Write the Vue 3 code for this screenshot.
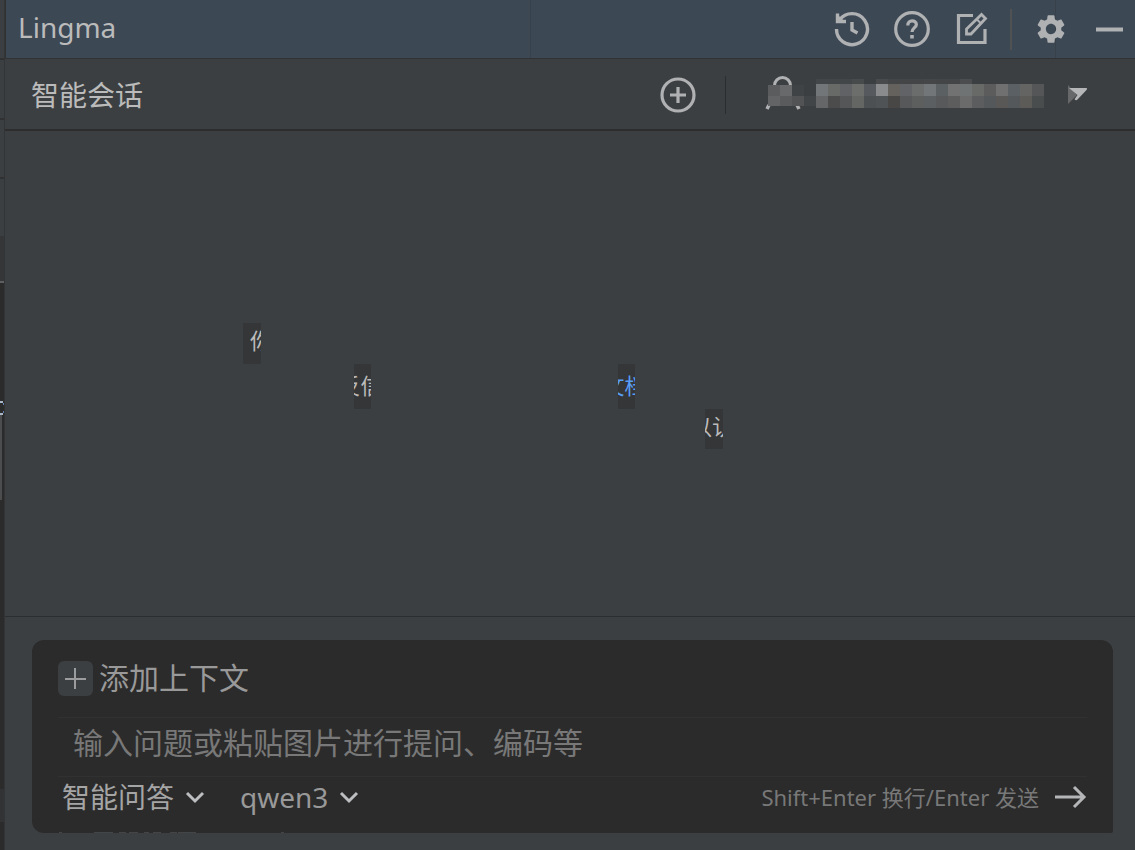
<script setup>
import { ref } from 'vue'

const question = ref('')
const mode = ref('智能问答')
const model = ref('qwen3')

const maskRows = [
  { y: 4, h: 5, x: 56, cells: ['#434648', '#434648', '#434648', '#484b4c', '', '#484a4b', '#434546', '#434546', '#434546', '#444648', '#434546', '#434546', '#4b4d4e'] },
  { y: 9, h: 12, x: 56, cells: ['#737678', '#686a68', '#606266', '#6c6e6c', '#565a5e', '#8a8b8c', '#65625d', '#626366', '#6b6d6c', '#727678', '#5b6063', '#737272', '#6f7374', '#686a68', '#5c5c5d', '#707070', '#5a6064', '#646562', '#555657'] },
  { y: 21, h: 12, x: 56, cells: ['#646668', '#4c4c4c', '#545658', '#646663', '#4c5052', '#4f5355', '#494745', '#575859', '#5d5e5e', '#5b5f61', '#57595a', '#5d5d5d', '#6b6b6b', '#5b5d5e', '#55585b', '#5a5757', '#54585b', '#5c5b57', '#4a4d4e'] },
  { y: 10, h: 11, x: 8, cells: ['#5b5c5e', '#68696a', '#404345'] },
  { y: 21, h: 10, x: 8, cells: ['#626466', '#5a5b5c', '#525354', '#424547'] }
]
</script>

<template>
  <div class="window">
    <aside class="edge" aria-hidden="true">
      <svg width="5" height="850" shape-rendering="crispEdges">
        <rect width="4" height="236" fill="#3c3f41" />
        <path d="M0 58.500h5M0 118.500h4M0 178h4" stroke="#303132" stroke-width="2" />
        <rect y="236" width="4" height="45" fill="#353637" />
        <rect y="281" width="4" height="2" fill="#5e5f60" />
        <path d="M0 402h3M0 413.500h3" stroke="#a9b7c6" stroke-width="2" />
        <path d="M3.500 403v2M3.500 411v2" stroke="#5f7fa8" />
        <rect y="415" width="2" height="85" fill="#4c4d4e" />
        <rect y="789" width="4" height="33" fill="#323334" />
      </svg>
    </aside>

    <div class="panel">
      <header class="titlebar">
        <h1>Lingma</h1>
        <nav class="tools">
          <button aria-label="历史">
            <svg width="36" height="36" viewBox="0 0 36 36" fill="none" stroke="#afb1b3" stroke-width="3.400">
              <path d="M2.500 18A15.500 15.500 0 1 0 5.500 9" />
              <path d="M3.500 2.500v8h8.500M18 11v8l5.500 3" />
              <path d="M3 3l8 8H3z" fill="#afb1b3" stroke="none" />
            </svg>
          </button>
          <button aria-label="帮助">
            <svg width="36" height="36" viewBox="0 0 36 36" fill="none" stroke="#afb1b3" stroke-width="3.200">
              <circle cx="18" cy="18" r="16.300" />
              <path d="M13.800 14.500c0-6.500 8.600-5.500 8.600-1 0 3-4.400 3.500-4.400 7.500" />
              <path d="M18 24v3.500" stroke-width="3.600" />
            </svg>
          </button>
          <button aria-label="反馈">
            <svg width="36" height="36" viewBox="0 0 36 36" fill="none" stroke="#afb1b3" stroke-width="3.200">
              <path d="M19 4.500H4.500V31.500H31V18" />
              <path d="M12.500 23v-5L27.500 3.500l4 4L17 23z" stroke-width="2.800" />
              <path d="M22.500 8l4.500 4.500" stroke-width="2" />
            </svg>
          </button>
          <i class="split"></i>
          <button aria-label="设置">
            <svg width="30" height="30" viewBox="1.500 1.500 21 21">
              <path fill="#afb1b3" d="M19.140 12.940c.04-.3.060-.61.060-.94s-.02-.64-.07-.94l2.030-1.580a.49.490 0 0 0 .12-.61l-1.920-3.320a.49.490 0 0 0-.59-.22l-2.390.96c-.5-.38-1.030-.7-1.620-.94l-.36-2.540A.484.484 0 0 0 13.920 2.400h-3.840c-.24 0-.43.170-.47.410l-.36 2.540c-.59.240-1.130.570-1.620.94l-2.390-.96a.48.480 0 0 0-.59.220L2.740 8.870a.47.470 0 0 0 .12.610l2.030 1.580c-.05.3-.09.630-.09.940s.02.640.07.940l-2.030 1.580a.49.490 0 0 0-.12.610l1.920 3.320c.12.220.37.290.59.220l2.390-.96c.5.380 1.030.7 1.620.94l.36 2.540c.05.240.240.410.480.410h3.840c.24 0 .44-.17.470-.41l.36-2.540c.59-.24 1.130-.56 1.620-.94l2.390.96c.22.080.470 0 .59-.22l1.920-3.320a.47.470 0 0 0-.12-.61zM12 15.600A3.610 3.610 0 0 1 8.400 12c0-1.980 1.620-3.600 3.600-3.600s3.600 1.620 3.600 3.600-1.620 3.600-3.600 3.600" />
            </svg>
          </button>
          <button class="min" aria-label="最小化">
            <svg width="27" height="30"><path d="M0 15.500h27" stroke="#afb1b3" stroke-width="4" /></svg>
          </button>
        </nav>
      </header>

      <div class="session">
        <h2>智能会话</h2>
        <button aria-label="新建会话">
          <svg width="36" height="36" fill="none" stroke="#afb1b3" stroke-width="3.200">
            <circle cx="18" cy="18" r="16" />
            <path d="M18 10v16M10 18h16" />
          </svg>
        </button>
        <i class="rule"></i>
        <button class="account" aria-label="账户">
          <svg width="330" height="40">
            <circle cx="22.500" cy="10.500" r="8" fill="none" stroke="#afb1b3" stroke-width="3" />
            <path d="M9 30l-2 4M37 30l2 4" stroke="#afb1b3" stroke-width="3.500" />
            <g v-for="row in maskRows" :key="row.x + '-' + row.y" shape-rendering="crispEdges">
              <rect v-for="(color, i) in row.cells" :key="i" :x="row.x + i * 12" :y="row.y" width="12" :height="row.h" :fill="color || 'none'" />
            </g>
            <path d="M308 10v19l9-9z" fill="#66686a" />
            <path d="M309 13h17.500c.8 0 .5 1.500 0 2l-9 9.500c-1 1-2 .8-3-.3l3-4.200z" fill="#b4b6b8" />
          </svg>
        </button>
      </div>

      <main class="welcome">
        <span class="chip chip-you"><b>你</b></span>
        <span class="chip chip-info"><b>反信</b></span>
        <a class="chip chip-doc" href="#"><b>文档</b></a>
        <span class="chip chip-with"><b>以认</b></span>
      </main>

      <footer class="dock">
        <form class="composer" @submit.prevent>
          <button type="button" class="context">
            <span class="plus"><svg width="21" height="21"><path d="M10 0v21M0 11h21" stroke="#9a9c9e" stroke-width="2" /></svg></span>
            <span>添加上下文</span>
          </button>
          <input v-model="question" aria-label="问题" placeholder="输入问题或粘贴图片进行提问、编码等">
          <div class="options">
            <label class="pick mode">
              <select v-model="mode" aria-label="模式"><option>智能问答</option></select>
              <svg width="20" height="14" fill="none" stroke="#bcbec0" stroke-width="3"><path d="M2 3l8 8 8-8" /></svg>
            </label>
            <label class="pick model">
              <select v-model="model" aria-label="模型"><option>qwen3</option></select>
              <svg width="20" height="14" fill="none" stroke="#bcbec0" stroke-width="3"><path d="M2 3l8 8 8-8" /></svg>
            </label>
            <span class="hint">Shift+Enter 换行/Enter 发送</span>
            <button class="send" aria-label="发送">
              <svg width="32" height="24" fill="none" stroke="#b4b6b8" stroke-width="3"><path d="M0 12h29M19 2l10 10-10 10" /></svg>
            </button>
          </div>
          <svg class="trace" width="300" height="1" stroke="#444546"><path d="M27 .5h3M62 .5h19M87 .5h7M97 .5h9M112 .5h5M121 .5h8M138 .5h7M146 .5h18M249 .5h3" /></svg>
        </form>
      </footer>
    </div>
  </div>
</template>

<style>
body { margin: 0; background: #3c3f41; }
</style>

<style scoped>
* { box-sizing: border-box; }
.window {
  display: flex;
  min-height: 100vh;
  font-family: "Noto Sans", "Noto Sans CJK SC", sans-serif;
  color: #bbb;
  background: #3c3f41;
}
.edge { position: relative; width: 5px; flex: none; background: #2b2b2b; border-right: 1px solid #333435; overflow: hidden; }
.edge svg { position: absolute; top: 0; left: 0; }
.panel { flex: 1; min-width: 0; display: flex; flex-direction: column; }
button { padding: 0; border: 0; background: none; font: inherit; color: inherit; display: flex; align-items: center; }
svg { display: block; }
h1, h2 { margin: 0; font-weight: 400; }
.titlebar {
  display: flex;
  align-items: center;
  justify-content: space-between;
  height: 59px;
  padding: 0 12px;
  border-bottom: 1px solid #323232;
  border-left: 1px solid #323232;
  background:
    linear-gradient(#384049, #384049) 524px 0 / 1px 100% no-repeat,
    linear-gradient(#384049, #384049) 1049px 0 / 1px 100% no-repeat,
    #3d4855;
}
h1 { font-size: 28px; line-height: 40px; padding-bottom: 4px; }
.tools { display: flex; align-items: center; gap: 24px; }
.split { width: 2px; height: 41px; margin-left: -4px; background: #4f5153; }
.tools .min { margin-left: 6px; }
.session {
  display: flex;
  align-items: center;
  height: 72px;
  padding: 2px 45px 0 26px;
  border-bottom: 2px solid #2d2d2d;
}
h2 { flex: 1; font-size: 28px; line-height: 40px; }
.rule { width: 1px; height: 38px; margin: 0 34px 0 29px; background: #2c2d2e; }
.account svg { width: 330px; }
.welcome { flex: 1; position: relative; border-bottom: 1px solid #2c2d2e; }
.chip {
  position: absolute;
  display: flex;
  justify-content: center;
  width: 18px;
  overflow: hidden;
  background: #353637;
  color: #bbb;
  font-size: 22px;
  line-height: 34px;
  white-space: nowrap;
  text-decoration: none;
}
.chip b { font-weight: 400; }
.chip-you { left: 238px; top: 192px; height: 41px; justify-content: flex-start; padding-left: 7px; }
.chip-info { left: 349px; top: 233px; height: 45px; line-height: 43px; width: 17px; padding-right: 4px; }
.chip-doc { left: 613px; top: 233px; height: 45px; line-height: 43px; width: 17px; padding-right: 4px; color: #589df6; }
.chip-with { left: 700px; top: 278px; height: 40px; padding-right: 4px; }
.dock { padding: 23px 22px 17px 27px; }
.composer {
  position: relative;
  padding: 20px 26px 17px;
  border-radius: 12px 12px 2px 12px;
  background: #2b2b2b;
}
.context { gap: 6px; height: 36px; font-size: 30px; line-height: 36px; color: #999; }
.plus { display: grid; place-items: center; width: 35px; height: 35px; border-radius: 6px; background: #3c3f41; }
input {
  display: block;
  width: 100%;
  height: 60px;
  margin-top: 21px;
  padding: 0 15px 10px;
  border: solid #313131;
  border-width: 1px 0;
  outline: 0;
  background: none;
  color: #bbb;
  font: 30px "Noto Sans", "Noto Sans CJK SC", sans-serif;
}
input::placeholder { color: #787878; opacity: 1; }
.options { display: flex; align-items: center; height: 39px; padding-left: 4px; }
.pick { display: flex; align-items: center; gap: 10px; margin-right: 35px; }
select { appearance: none; padding: 0; border: 0; outline: 0; background: none; color: #a5a5a5; font: 28px/40px "Noto Sans", "Noto Sans CJK SC", sans-serif; }
.model select { color: #999; }
.hint { margin-left: auto; font-size: 22px; line-height: 36px; color: #787878; }
.send { margin-left: 16px; }
.trace { position: absolute; left: 0; bottom: 0; }
</style>
